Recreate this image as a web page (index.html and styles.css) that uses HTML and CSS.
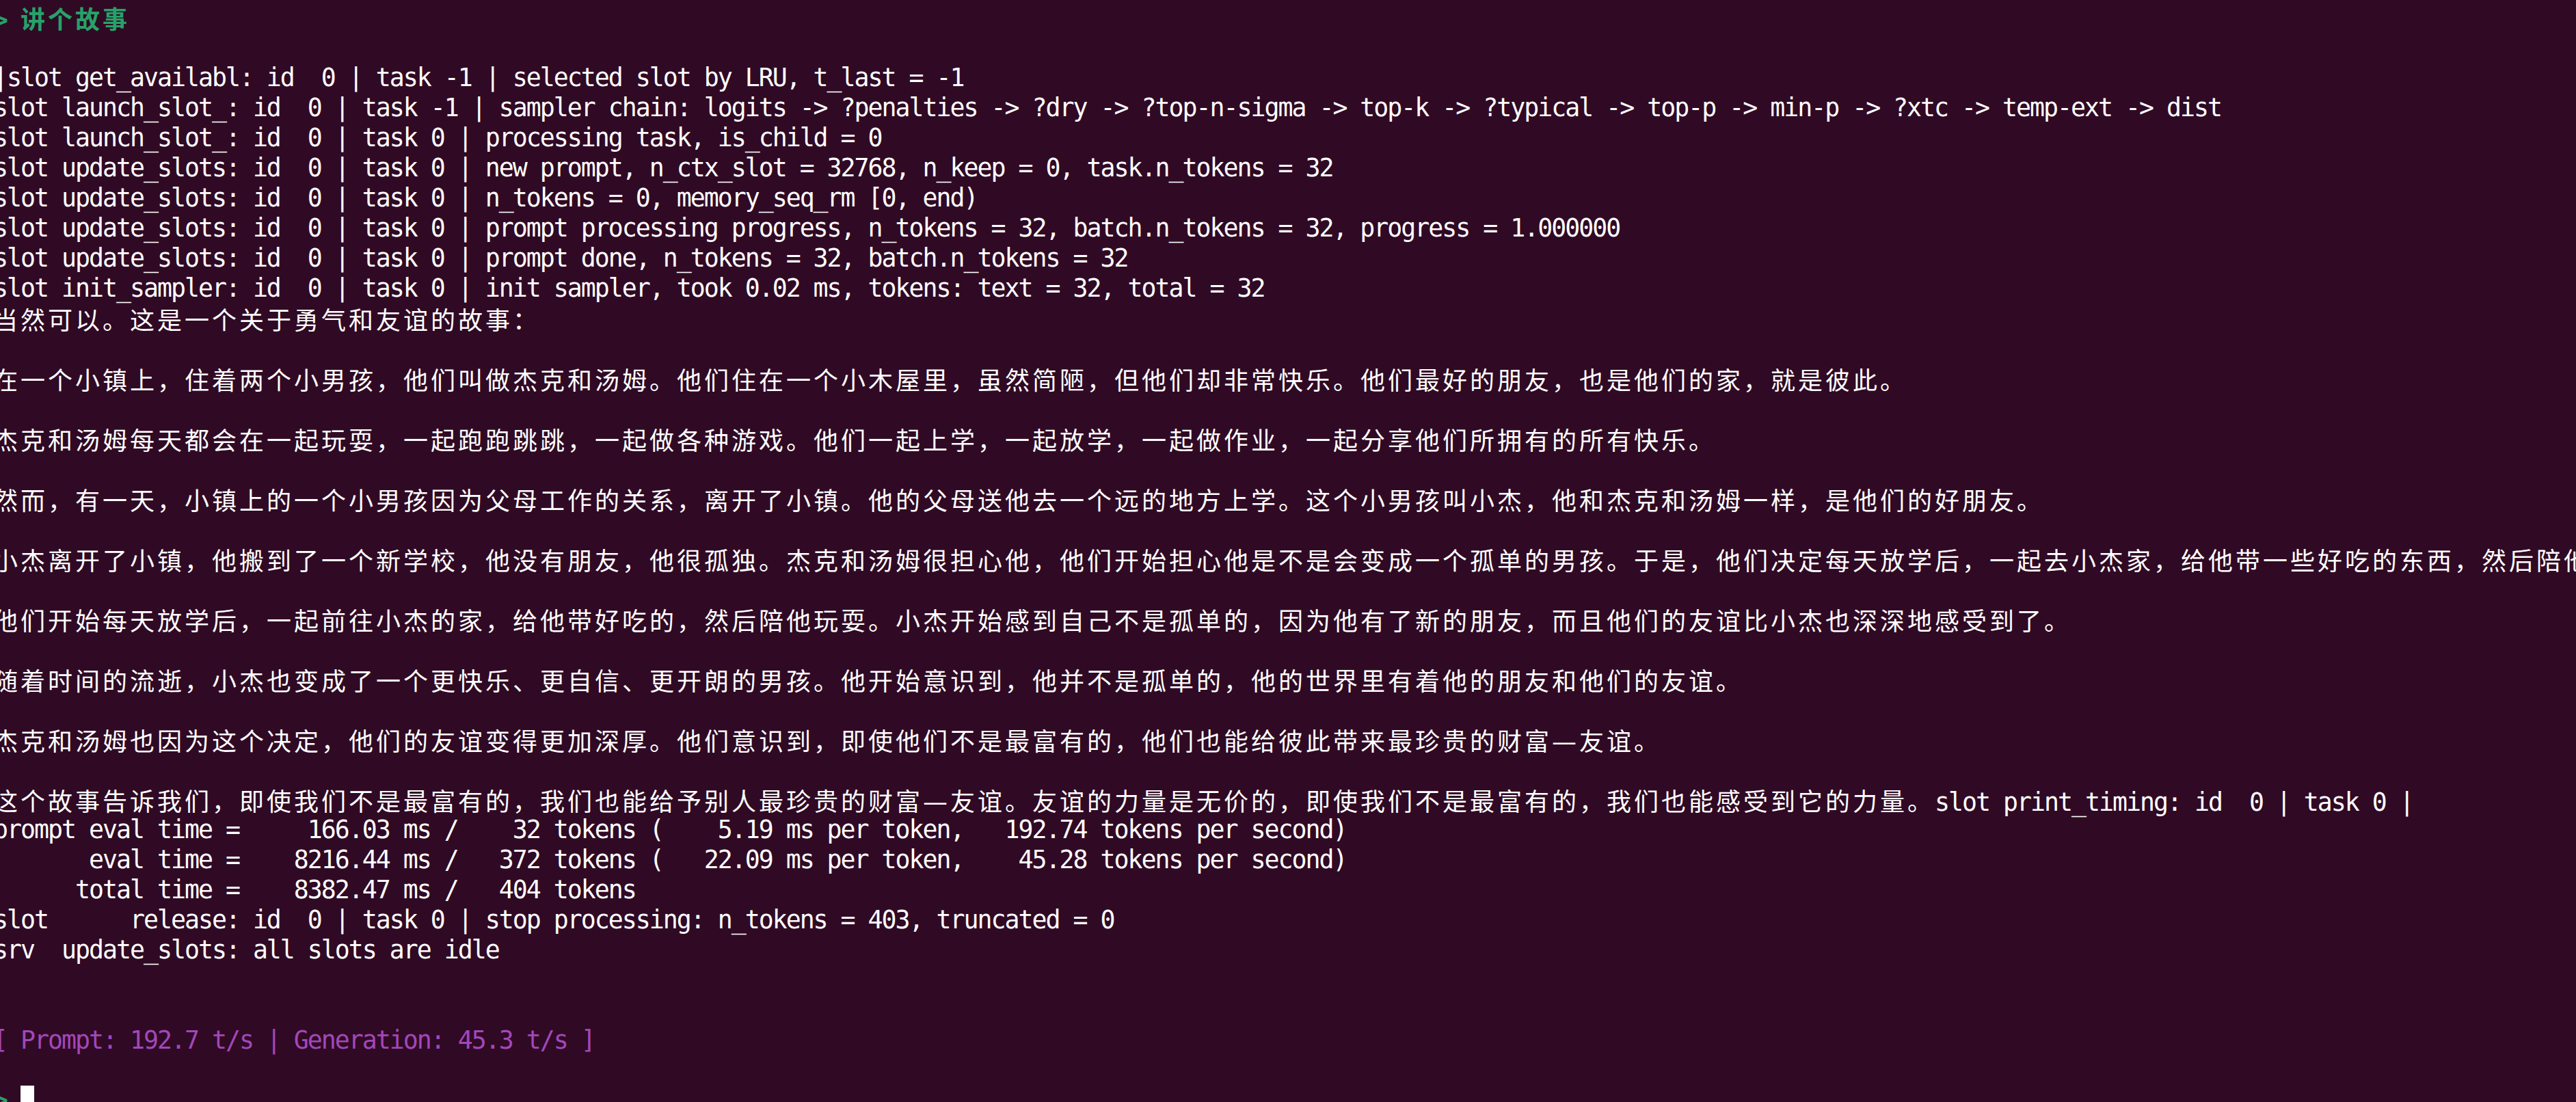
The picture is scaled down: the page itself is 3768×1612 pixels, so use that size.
FILE: index.html
```html
<!DOCTYPE html>
<html lang="zh">
<head>
<meta charset="utf-8">
<title>Terminal</title>
<link rel="stylesheet" href="styles.css">
</head>
<body>
<div class="term">
<div class="ln prompt"><span class="bold">&gt; </span><span class="zh bold">讲个故事</span></div>
<div class="ln"></div>
<div class="ln">|slot get_availabl: id  0 | task -1 | selected slot by LRU, t_last = -1</div>
<div class="ln">slot launch_slot_: id  0 | task -1 | sampler chain: logits -&gt; ?penalties -&gt; ?dry -&gt; ?top-n-sigma -&gt; top-k -&gt; ?typical -&gt; top-p -&gt; min-p -&gt; ?xtc -&gt; temp-ext -&gt; dist</div>
<div class="ln">slot launch_slot_: id  0 | task 0 | processing task, is_child = 0</div>
<div class="ln">slot update_slots: id  0 | task 0 | new prompt, n_ctx_slot = 32768, n_keep = 0, task.n_tokens = 32</div>
<div class="ln">slot update_slots: id  0 | task 0 | n_tokens = 0, memory_seq_rm [0, end)</div>
<div class="ln">slot update_slots: id  0 | task 0 | prompt processing progress, n_tokens = 32, batch.n_tokens = 32, progress = 1.000000</div>
<div class="ln">slot update_slots: id  0 | task 0 | prompt done, n_tokens = 32, batch.n_tokens = 32</div>
<div class="ln">slot init_sampler: id  0 | task 0 | init sampler, took 0.02 ms, tokens: text = 32, total = 32</div>
<div class="ln"><span class="zh">当然可以。这是一个关于勇气和友谊的故事：</span></div>
<div class="ln"></div>
<div class="ln"><span class="zh">在一个小镇上，住着两个小男孩，他们叫做杰克和汤姆。他们住在一个小木屋里，虽然简陋，但他们却非常快乐。他们最好的朋友，也是他们的家，就是彼此。</span></div>
<div class="ln"></div>
<div class="ln"><span class="zh">杰克和汤姆每天都会在一起玩耍，一起跑跑跳跳，一起做各种游戏。他们一起上学，一起放学，一起做作业，一起分享他们所拥有的所有快乐。</span></div>
<div class="ln"></div>
<div class="ln"><span class="zh">然而，有一天，小镇上的一个小男孩因为父母工作的关系，离开了小镇。他的父母送他去一个远的地方上学。这个小男孩叫小杰，他和杰克和汤姆一样，是他们的好朋友。</span></div>
<div class="ln"></div>
<div class="ln"><span class="zh">小杰离开了小镇，他搬到了一个新学校，他没有朋友，他很孤独。杰克和汤姆很担心他，他们开始担心他是不是会变成一个孤单的男孩。于是，他们决定每天放学后，一起去小杰家，给他带一些好吃的东西，然后陪他一起玩耍。</span></div>
<div class="ln"></div>
<div class="ln"><span class="zh">他们开始每天放学后，一起前往小杰的家，给他带好吃的，然后陪他玩耍。小杰开始感到自己不是孤单的，因为他有了新的朋友，而且他们的友谊比小杰也深深地感受到了。</span></div>
<div class="ln"></div>
<div class="ln"><span class="zh">随着时间的流逝，小杰也变成了一个更快乐、更自信、更开朗的男孩。他开始意识到，他并不是孤单的，他的世界里有着他的朋友和他们的友谊。</span></div>
<div class="ln"></div>
<div class="ln"><span class="zh">杰克和汤姆也因为这个决定，他们的友谊变得更加深厚。他们意识到，即使他们不是最富有的，他们也能给彼此带来最珍贵的财富<span class="dash">—</span>友谊。</span></div>
<div class="ln"></div>
<div class="ln"><span class="zh">这个故事告诉我们，即使我们不是最富有的，我们也能给予别人最珍贵的财富<span class="dash">—</span>友谊。友谊的力量是无价的，即使我们不是最富有的，我们也能感受到它的力量。</span>slot print_timing: id  0 | task 0 |</div>
<div class="ln">prompt eval time =     166.03 ms /    32 tokens (    5.19 ms per token,   192.74 tokens per second)</div>
<div class="ln">       eval time =    8216.44 ms /   372 tokens (   22.09 ms per token,    45.28 tokens per second)</div>
<div class="ln">      total time =    8382.47 ms /   404 tokens</div>
<div class="ln">slot      release: id  0 | task 0 | stop processing: n_tokens = 403, truncated = 0</div>
<div class="ln">srv  update_slots: all slots are idle</div>
<div class="ln"></div>
<div class="ln"></div>
<div class="ln stats">[ Prompt: 192.7 t/s | Generation: 45.3 t/s ]</div>
<div class="ln"></div>
<div class="ln prompt"><span class="bold">&gt; </span><span class="cursor"></span></div>
</div>
</body>
</html>
```

FILE: styles.css
```css
html, body {
  margin: 0;
  padding: 0;
  height: 1612px;
  overflow: hidden;
  background: #300a24;
}

.term {
  padding-top: 4px;
  margin-left: -10px;
  color: #ffffff;
  font-family: "DejaVu Sans Mono", "Liberation Mono", monospace;
  font-size: 36.54px;
  letter-spacing: -2px;
  line-height: 44px;
}

.ln {
  height: 44px;
  white-space: pre;
}

.zh {
  font-family: "Noto Sans CJK SC", "Noto Sans CJK JP", sans-serif;
  font-size: 36px;
  letter-spacing: 4px;
}

.dash {
  font-family: "DejaVu Sans", sans-serif;
}

.prompt {
  color: #26a269;
}

.bold {
  font-weight: bold;
}

.stats {
  color: #a347ba;
}

.cursor {
  display: inline-block;
  width: 20px;
  height: 44px;
  vertical-align: top;
  background: #ffffff;
}
```
